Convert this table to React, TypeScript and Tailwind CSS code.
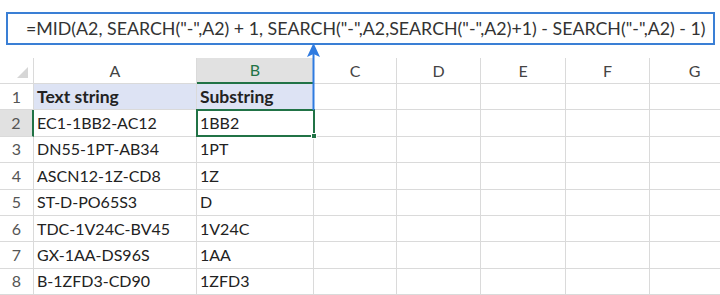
import React from "react";

const rows: [string, string][] = [
  ["EC1-1BB2-AC12", "1BB2"],
  ["DN55-1PT-AB34", "1PT"],
  ["ASCN12-1Z-CD8", "1Z"],
  ["ST-D-PO65S3", "D"],
  ["TDC-1V24C-BV45", "1V24C"],
  ["GX-1AA-DS96S", "1AA"],
  ["B-1ZFD3-CD90", "1ZFD3"],
];

const cols = ["C", "D", "E", "F", "G"];

const font = { fontFamily: "Lato, 'Open Sans', sans-serif" };

export default function App() {
  return (
    <div className="relative w-[720px] h-[295px] overflow-hidden bg-white" style={font}>
      {/* formula bar */}
      <div className="h-[58px] pt-[12px] pl-[6px] pr-[5px]">
        <div className="h-[33px] border-2 border-[#3a7fd5] flex items-center pl-[18px] text-[17.8px] text-[#333] whitespace-nowrap">
          =MID(A2, SEARCH("-",A2) + 1, SEARCH("-",A2,SEARCH("-",A2)+1) - SEARCH("-",A2) - 1)
        </div>
      </div>

      {/* sheet grid */}
      <div className="grid grid-cols-[34px_163px_117px_83px_84px_85px_84px_90px] text-[16px] text-[#222]">
        {/* column headers */}
        <div className="h-[26px] border-r border-b border-[#dadada] flex items-end justify-end pr-[5px] pb-[5px]">
          <div className="w-0 h-0 border-l-[11px] border-l-transparent border-b-[11px] border-b-[#d6d6d6]" />
        </div>
        <div className="h-[26px] border-r border-b border-[#dadada] flex items-center justify-center text-[#444]">A</div>
        <div className="h-[26px] border-r border-[#dadada] border-b-2 border-b-[#217346] bg-[#e1e1e1] flex items-center justify-center text-[#217346]">B</div>
        {cols.map((c) => (
          <div key={c} className="h-[26px] border-r border-b border-[#dadada] flex items-center justify-center text-[#444]">
            {c}
          </div>
        ))}

        {/* row 1 */}
        <div className="h-[26.4px] border-r border-b border-[#dadada] flex items-center justify-center text-[#555]">1</div>
        <div className="h-[26.4px] border-r border-b border-[#dadada] bg-[#dde3f4] flex items-center pl-[3px] font-bold text-[17.5px]">Text string</div>
        <div className="h-[26.4px] border-r border-b border-[#dadada] bg-[#dde3f4] flex items-center pl-[3px] font-bold text-[17.5px]">Substring</div>
        {cols.map((c) => (
          <div key={c} className="h-[26.4px] border-r border-b border-[#dadada]" />
        ))}

        {rows.map(([a, b], i) => (
          <React.Fragment key={a}>
            <div
              className={
                i === 0
                  ? "h-[26.4px] border-r-2 border-r-[#217346] border-b border-[#dadada] bg-[#e1e1e1] flex items-center justify-center text-[#555]"
                  : "h-[26.4px] border-r border-b border-[#dadada] flex items-center justify-center text-[#555]"
              }
            >
              {i + 2}
            </div>
            <div className="h-[26.4px] border-r border-b border-[#dadada] flex items-center pl-[3px]">{a}</div>
            <div className="h-[26.4px] border-r border-b border-[#dadada] flex items-center pl-[3px]">{b}</div>
            {cols.map((c) => (
              <div key={c} className="h-[26.4px] border-r border-b border-[#dadada]" />
            ))}
          </React.Fragment>
        ))}
      </div>

      {/* selected cell B2 */}
      <div className="absolute left-[196px] top-[109px] w-[119px] h-[28px] border-2 border-[#217346]" />
      <div className="absolute left-[311px] top-[133px] w-[6px] h-[6px] bg-[#217346] border border-white" />

      {/* blue arrow */}
      <svg className="absolute left-[300px] top-[42px]" width="28" height="70" viewBox="0 0 28 70">
        <line x1="13.5" y1="8" x2="13.5" y2="68" stroke="#2f7be0" strokeWidth="2" />
        <path d="M13.5 1 L20 15 L13.5 12 L7 15 Z" fill="#2f7be0" />
      </svg>
    </div>
  );
}
